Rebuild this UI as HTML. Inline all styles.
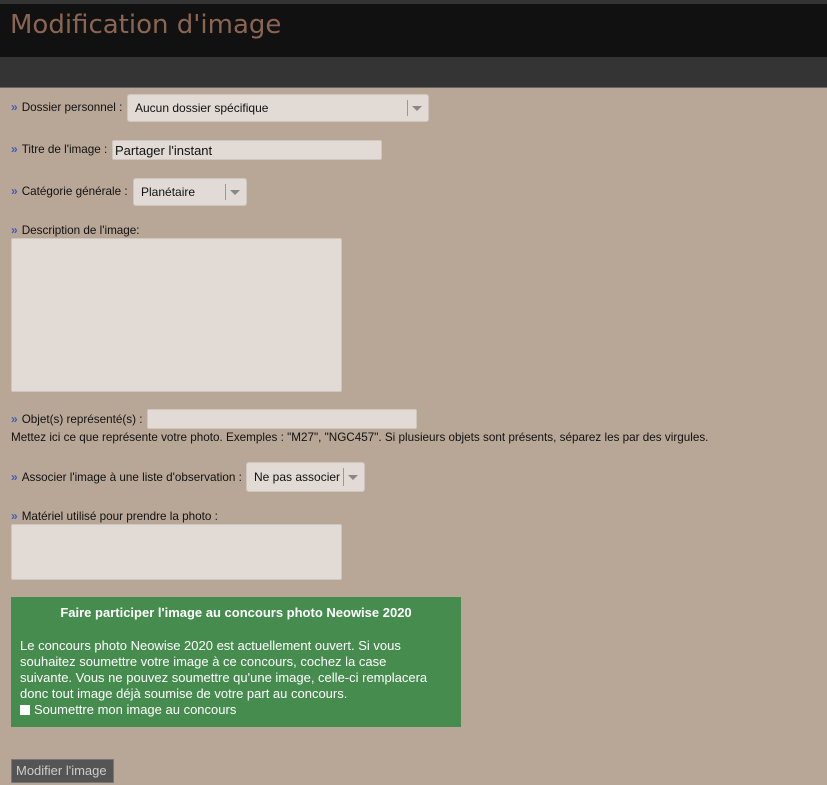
<!DOCTYPE html>
<html><head><meta charset="utf-8"><style>
*{margin:0;padding:0;box-sizing:border-box}
body{width:827px;height:785px;background:#b8a797;font-family:"Liberation Sans",Arial,sans-serif;font-size:11.7px;color:#111;position:relative;overflow:hidden}
.a{position:absolute}
.top{left:0;top:0;width:827px;height:4px;background:#333}
.hd{left:0;top:4px;width:827px;height:53px;background:#111}
.hd2{left:0;top:57px;width:827px;height:31px;background:#343434;border-bottom:1px solid #666}
h1{position:absolute;left:10px;top:10px;font-family:"DejaVu Sans",sans-serif;font-weight:normal;font-size:26px;color:#8a6553;letter-spacing:0}
.lb{position:absolute;left:11px;white-space:nowrap}
.lb:before{content:"»";color:#3b5fc0;font-weight:bold;margin-right:4px;font-size:12px}
.f{position:absolute;background:#e2dad4;border:1px solid #cfc6bf;border-radius:2px}
.sel{border-radius:3px}
.sel span{position:absolute;left:7px;top:50%;transform:translateY(-50%);font-size:12px}
.sel i{position:absolute;right:6px;top:50%;margin-top:-2px;border-left:5px solid transparent;border-right:5px solid transparent;border-top:5px solid #888}
.sel b{position:absolute;right:20px;top:5px;bottom:5px;width:1px;background:#999}
.green{left:11px;top:597px;width:450px;height:130px;background:#458c4e;color:#fff;font-size:13px}
.btn{left:11px;top:759px;width:103px;height:24px;background:#555;border:1px solid #777;color:#ccc;font-size:13px;padding:3px 0 0 4px}
</style></head><body>
<div class="a top"></div><div class="a hd"></div><div class="a hd2"></div>
<h1>Modification d'image</h1>

<div class="lb" style="top:100px">Dossier personnel :</div>
<div class="f sel" style="left:127px;top:94px;width:302px;height:28px"><span>Aucun dossier spécifique</span><b></b><i></i></div>

<div class="lb" style="top:142px">Titre de l'image :</div>
<div class="f" style="left:112px;top:140px;width:270px;height:20px;padding:2px 0 0 2px;font-size:13px">Partager l'instant</div>

<div class="lb" style="top:184px">Catégorie générale :</div>
<div class="f sel" style="left:133px;top:178px;width:114px;height:28px"><span>Planétaire</span><b></b><i></i></div>

<div class="lb" style="top:223px">Description de l'image:</div>
<div class="f" style="left:11px;top:238px;width:331px;height:154px"></div>

<div class="lb" style="top:412px">Objet(s) représenté(s) :</div>
<div class="f" style="left:147px;top:409px;width:270px;height:20px"></div>
<div class="a" style="left:11px;top:431px;white-space:nowrap">Mettez ici ce que représente votre photo. Exemples : "M27", "NGC457". Si plusieurs objets sont présents, séparez les par des virgules.</div>

<div class="lb" style="top:470px">Associer l'image à une liste d'observation :</div>
<div class="f sel" style="left:246px;top:462px;width:119px;height:30px"><span>Ne pas associer</span><b></b><i></i></div>

<div class="lb" style="top:509px">Matériel utilisé pour prendre la photo :</div>
<div class="f" style="left:11px;top:524px;width:331px;height:56px"></div>

<div class="a green">
<div style="text-align:center;font-weight:bold;font-size:13px;margin-top:8px">Faire participer l'image au concours photo Neowise 2020</div>
<div style="margin:18px 0 0 9px;line-height:16px;white-space:nowrap">Le concours photo Neowise 2020 est actuellement ouvert. Si vous<br>souhaitez soumettre votre image à ce concours, cochez la case<br>suivante. Vous ne pouvez soumettre qu'une image, celle-ci remplacera<br>donc tout image déjà soumise de votre part au concours.<br><span style="display:inline-block;width:10px;height:10px;background:#fff;vertical-align:-1px;margin-right:4px"></span>Soumettre mon image au concours</div>
</div>

<div class="a btn">Modifier l'image</div>
</body></html>
